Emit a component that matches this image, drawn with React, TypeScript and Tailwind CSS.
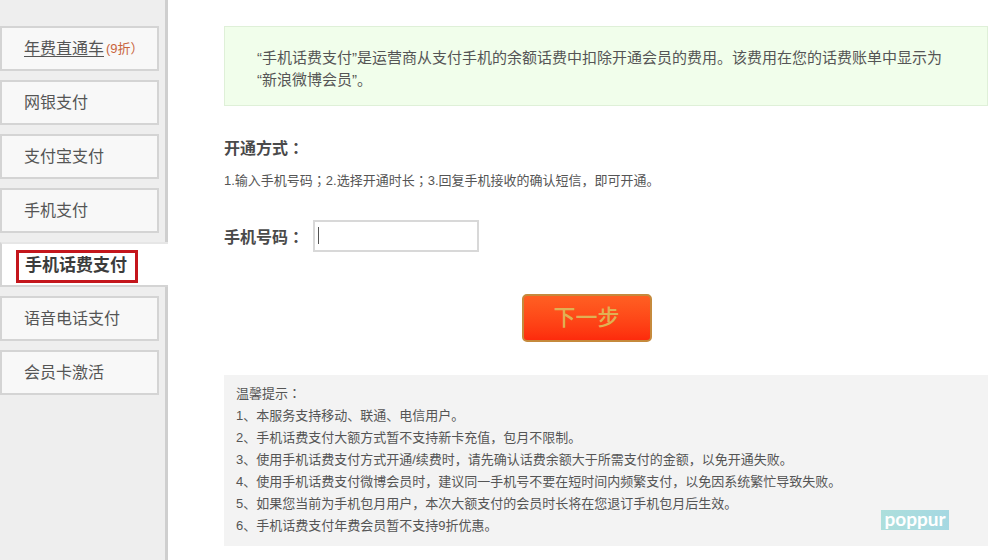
import { useState } from "react";
import clsx from "clsx";

type Method = {
  id: string;
  label: string;
  discount?: string;
};

const METHODS: Method[] = [
  { id: "yearly", label: "年费直通车", discount: "(9折）" },
  { id: "bank", label: "网银支付" },
  { id: "alipay", label: "支付宝支付" },
  { id: "mobile", label: "手机支付" },
  { id: "phone-bill", label: "手机话费支付" },
  { id: "voice", label: "语音电话支付" },
  { id: "card", label: "会员卡激活" },
];

const TIPS = [
  "1、本服务支持移动、联通、电信用户。",
  "2、手机话费支付大额方式暂不支持新卡充值，包月不限制。",
  "3、使用手机话费支付方式开通/续费时，请先确认话费余额大于所需支付的金额，以免开通失败。",
  "4、使用手机话费支付微博会员时，建议同一手机号不要在短时间内频繁支付，以免因系统繁忙导致失败。",
  "5、如果您当前为手机包月用户，本次大额支付的会员时长将在您退订手机包月后生效。",
  "6、手机话费支付年费会员暂不支持9折优惠。",
];

// Full-width ： and ； are centred in their cell by the TC face only
function Text({ children }: { children: string }) {
  return children.split(/([：；])/).map((part, i) =>
    i % 2 ? (
      <span key={i} className="font-['Noto_Sans_CJK_TC',sans-serif] leading-none">
        {part}
      </span>
    ) : (
      part
    ),
  );
}

function Sidebar({ active }: { active: string }) {
  return (
    <nav className="flex w-[168px] shrink-0 flex-col gap-[9px] border-r-[3px] border-[#cfcfcf] bg-[#eeeeee] pt-[26px]">
      {METHODS.map((m) =>
        m.id === active ? (
          <a
            key={m.id}
            href={`#${m.id}`}
            aria-current="page"
            className="-mr-[3px] flex h-[45px] items-end border-y-2 border-l-2 border-[#d4d4d4] border-t-[#e6e6e6] bg-white pb-0.5 pl-[14px] text-[17px] font-bold text-[#3c3c3c]"
          >
            <span className="flex h-[33px] items-center border-[3px] border-[#c4161c] pr-2 pb-0.5 pl-1.5">
              {m.label}
            </span>
          </a>
        ) : (
          <a
            key={m.id}
            href={`#${m.id}`}
            className="mr-1.5 flex h-[45px] items-center border-2 border-[#d4d4d4] bg-[#f8f8f8] pl-[22px] text-base text-[#555555]"
          >
            <span className={clsx(m.discount && "underline underline-offset-2")}>{m.label}</span>
            {m.discount && (
              <span className="pl-0.5 text-[13px] text-[#c8643c]">{m.discount}</span>
            )}
          </a>
        ),
      )}
    </nav>
  );
}

function PhoneForm() {
  const [phone, setPhone] = useState("");

  return (
    <form onSubmit={(e) => e.preventDefault()} className="pt-7">
      <div className="flex items-center">
        <label htmlFor="phone" className="w-[89px] pt-1 text-base font-bold text-[#4a4a4a]">
          <Text>手机号码：</Text>
        </label>
        <div className="relative">
          <input
            id="phone"
            type="tel"
            value={phone}
            onChange={(e) => setPhone(e.target.value)}
            className="block h-8 w-[166px] border-2 border-[#d8d8d8] bg-white px-1 text-sm text-[#444444] outline-none"
          />
          {!phone && (
            <span className="pointer-events-none absolute top-[7px] left-[5px] h-[17px] w-px bg-[#555555]" />
          )}
        </div>
      </div>
      <div className="flex justify-center pt-[42px] pr-[39px]">
        <button
          type="submit"
          className="h-12 w-[130px] rounded-[5px] border-2 border-[#c58a3c] bg-linear-to-b from-[#ff5f22] to-[#fd2a0c] text-[22px] leading-none font-medium text-[#e0b054]"
        >
          下一步
        </button>
      </div>
    </form>
  );
}

export default function App() {
  return (
    <div className="flex min-h-screen bg-white font-['Liberation_Sans','Noto_Sans_CJK_SC',sans-serif] text-[#555555]">
      <Sidebar active="phone-bill" />

      <main className="flex-1 pt-[26px] pr-3 pb-3.5 pl-14">
        {/* Notice */}
        <p className="border border-[#dff0d8] bg-[#f1feeb] pt-5 pb-3.5 pl-8 text-[15px] leading-[22px]">
          “手机话费支付”是运营商从支付手机的余额话费中扣除开通会员的费用。该费用在您的话费账单中显示为
          <br />
          “新浪微博会员”。
        </p>

        <h2 className="pt-[31px] text-base leading-6 font-bold text-[#4a4a4a]">
          <Text>开通方式：</Text>
        </h2>
        <p className="pt-[9px] text-[13px] leading-[22px]">
          <Text>1.输入手机号码；2.选择开通时长；3.回复手机接收的确认短信，即可开通。</Text>
        </p>

        <PhoneForm />

        {/* Tips */}
        <section className="relative mt-[33px] bg-[#f3f3f3] px-3 pt-2 pb-[9px] text-[13px] leading-[22px]">
          <h3>
            <Text>温馨提示：</Text>
          </h3>
          <ul>
            {TIPS.map((tip) => (
              <li key={tip}>{tip}</li>
            ))}
          </ul>
          <span className="absolute right-[39px] bottom-4 flex h-5 w-[68px] items-center justify-center bg-linear-to-r from-[#addfdc] to-[#a5d8e2] pb-1 font-[Lato,sans-serif] text-[19px] leading-none font-bold text-white">
            poppur
          </span>
        </section>
      </main>
    </div>
  );
}
